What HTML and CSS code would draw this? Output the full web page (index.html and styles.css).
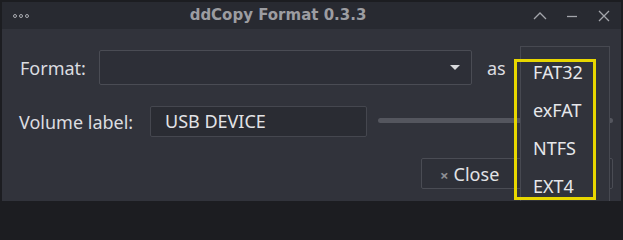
FILE: index.html
```html
<!DOCTYPE html>
<html>
<head>
<meta charset="utf-8">
<link rel="stylesheet" href="styles.css">
</head>
<body>
<div class="window">
  <div class="titlebar">
    <div class="dots"><span></span><span></span><span></span></div>
    <div class="title">ddCopy Format 0.3.3</div>
    <div class="wbtns">
      <svg class="b-up" width="14" height="10" viewBox="0 0 14 10"><path d="M1 8 L7 2 L13 8" fill="none" stroke="#a3a5ab" stroke-width="1.3"/></svg>
      <svg class="b-min" width="12" height="10" viewBox="0 0 12 10"><path d="M1 5.5 H11" fill="none" stroke="#a3a5ab" stroke-width="1.3"/></svg>
      <svg class="b-close" width="12" height="12" viewBox="0 0 12 12"><path d="M1 1 L11 11 M11 1 L1 11" fill="none" stroke="#a3a5ab" stroke-width="1.3"/></svg>
    </div>
  </div>
  <div class="content">
    <div class="row row1">
      <span class="label lbl-format">Format:</span>
      <div class="combo"><span class="arrow"></span></div>
      <span class="label as">as</span>
    </div>
    <div class="row row2">
      <span class="label lbl-vol">Volume label:</span>
      <div class="input">USB DEVICE</div>
      <div class="track"></div>
    </div>
    <div class="row row3">
      <div class="btn"><span class="x">×</span>Close</div>
    </div>
    <div class="popup">
      <div class="item">FAT32</div>
      <div class="item">exFAT</div>
      <div class="item">NTFS</div>
      <div class="item">EXT4</div>
    </div>
    <div class="highlight"></div>
  </div>
</div>
</body>
</html>
```
FILE: styles.css
```css
html, body {
  margin: 0;
  padding: 0;
  background: #1c1d21;
}
.window {
  width: 623px;
  height: 204px;
  box-sizing: border-box;
  border: 2px solid #1c1d21;
  border-bottom-width: 3px;
  display: flex;
  flex-direction: column;
  overflow: hidden;
  font-family: "Noto Sans", sans-serif;
  color: #dcdde0;
}
.titlebar {
  height: 27px;
  flex: none;
  background: #282a31;
  display: flex;
  align-items: center;
}
.dots {
  display: flex;
  gap: 2px;
  margin-left: 11px;
}
.dots span {
  border: 1px solid #a8aab0;
  border-radius: 50%;
  width: 2px;
  height: 2px;
}
.title {
  flex: 1;
  text-align: center;
  font-family: "DejaVu Sans", sans-serif;
  font-weight: bold;
  font-size: 15px;
  color: #9c9da1;
  margin-right: 6px;
  margin-bottom: 1px;
}
.wbtns {
  display: flex;
  align-items: center;
  margin-right: 11px;
}
.b-min {
  margin-left: 19px;
  width: 12px;
}
.b-close {
  margin-left: 20px;
}
.content {
  flex: 1;
  background: #31333b;
  position: relative;
}
.row {
  display: flex;
  align-items: center;
}
.label {
  font-size: 18px;
}
.row1 {
  margin-top: 21px;
  height: 35px;
}
.lbl-format {
  margin-left: 18px;
  width: 79px;
}
.combo {
  width: 373px;
  height: 35px;
  box-sizing: border-box;
  border: 1px solid #4a4c54;
  border-radius: 2px;
  background: #2d2f37;
  position: relative;
}
.arrow {
  position: absolute;
  right: 11px;
  top: 14px;
  width: 0;
  height: 0;
  border-left: 5px solid transparent;
  border-right: 5px solid transparent;
  border-top: 5px solid #d8d9dc;
}
.as {
  margin-left: 15px;
}
.row2 {
  margin-top: 21px;
  height: 31px;
}
.lbl-vol {
  margin-left: 17px;
  width: 131px;
}
.input {
  width: 217px;
  height: 31px;
  box-sizing: border-box;
  border: 1px solid #45474f;
  border-radius: 2px;
  background: #2a2c33;
  font-size: 18px;
  padding-left: 14px;
  line-height: 29px;
  color: #e2e3e6;
}
.track {
  margin-left: 11px;
  width: 235px;
  height: 5px;
  border-radius: 3px;
  background: #54565e;
  margin-top: -2px;
}
.row3 {
  margin-top: 21px;
  justify-content: flex-end;
  padding-right: 8px;
}
.btn {
  width: 192px;
  height: 31px;
  box-sizing: border-box;
  border: 1px solid #4a4c54;
  border-radius: 2px;
  background: #2e3038;
  font-size: 18px;
  display: flex;
  align-items: center;
  padding-left: 18px;
  color: #e2e3e6;
}
.btn .x {
  color: #8d8f95;
  font-size: 15px;
  font-weight: bold;
  margin-right: 5px;
  margin-top: 2px;
}
.popup {
  position: absolute;
  left: 518px;
  top: 17px;
  width: 90px;
  height: 170px;
  border: 1px solid #474951;
  background: #31333b;
  box-sizing: border-box;
  padding-top: 10px;
}
.item {
  font-size: 18px;
  height: 38px;
  line-height: 30px;
  padding-left: 12px;
  color: #e6e7ea;
}
.highlight {
  position: absolute;
  left: 512px;
  top: 30px;
  width: 82px;
  height: 141px;
  border: 3px solid #e8d700;
  box-sizing: border-box;
}
```
